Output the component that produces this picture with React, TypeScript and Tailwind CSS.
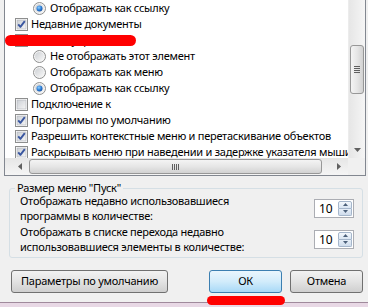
import React from 'react';

const font = { fontFamily: '"Noto Sans", "Segoe UI", sans-serif' };

function CheckBox({ checked }: { checked: boolean }) {
  return (
    <svg width="13" height="13" viewBox="0 0 13 13" className="shrink-0">
      <defs>
        <linearGradient id="cbg" x1="0" y1="0" x2="1" y2="1">
          <stop offset="0" stopColor="#cbcfd5" />
          <stop offset="1" stopColor="#f6f6f6" />
        </linearGradient>
      </defs>
      <rect x="0.5" y="0.5" width="12" height="12" fill="#fff" stroke="#8e8f8f" />
      <rect x="2" y="2" width="9" height="9" fill="url(#cbg)" stroke="#aeb3b9" strokeWidth="0.6" />
      {checked && (
        <path d="M3.2 6.4 L5.4 8.9 L9.8 3.2" fill="none" stroke="#3a57a0" strokeWidth="1.9" strokeLinejoin="round" />
      )}
    </svg>
  );
}

function Radio({ checked }: { checked: boolean }) {
  return (
    <svg width="13" height="13" viewBox="0 0 13 13" className="shrink-0">
      <defs>
        <linearGradient id="rbg" x1="0" y1="0" x2="1" y2="1">
          <stop offset="0" stopColor="#cdd0d4" />
          <stop offset="1" stopColor="#f8f8f8" />
        </linearGradient>
        <radialGradient id="rdot" cx="0.4" cy="0.35" r="0.7">
          <stop offset="0" stopColor="#8fd0ff" />
          <stop offset="0.6" stopColor="#2a7bd4" />
          <stop offset="1" stopColor="#1c4f9a" />
        </radialGradient>
      </defs>
      <circle cx="6.5" cy="6.5" r="6" fill="#f4f4f4" stroke="#8e8f8f" />
      <circle cx="6.5" cy="6.5" r="4.5" fill="url(#rbg)" />
      {checked && <circle cx="6.5" cy="6.5" r="3" fill="url(#rdot)" />}
    </svg>
  );
}

function CheckRow({ checked, label }: { checked: boolean; label: string }) {
  return (
    <div className="h-[16px] flex items-center pl-[10px] gap-[3px] whitespace-nowrap">
      <CheckBox checked={checked} />
      <span>{label}</span>
    </div>
  );
}

function RadioRow({ checked, label }: { checked: boolean; label: string }) {
  return (
    <div className="h-[16px] flex items-center pl-[28px] gap-[4px] whitespace-nowrap">
      <Radio checked={checked} />
      <span>{label}</span>
    </div>
  );
}

function Spinner() {
  return (
    <div className="flex w-[40px] h-[19px] border border-[#abadb3] bg-white shrink-0">
      <div className="flex-1 flex items-center pl-[4px] text-[12px] tracking-normal">10</div>
      <div className="w-[14px] flex flex-col my-[1px] mr-[1px]">
        <div className="flex-1 flex items-center justify-center border border-[#a5b6cb] rounded-t-[2px] bg-gradient-to-b from-[#f4f8fc] to-[#d9e5f2]">
          <svg width="5" height="3" viewBox="0 0 5 3">
            <path d="M0 3 L2.5 0 L5 3 Z" fill="#4c607a" />
          </svg>
        </div>
        <div className="flex-1 flex items-center justify-center border border-t-0 border-[#a5b6cb] rounded-b-[2px] bg-gradient-to-b from-[#e6eef7] to-[#cfdcec]">
          <svg width="5" height="3" viewBox="0 0 5 3">
            <path d="M0 0 L2.5 3 L5 0 Z" fill="#4c607a" />
          </svg>
        </div>
      </div>
    </div>
  );
}

export default function App() {
  return (
    <div
      className="relative w-[368px] h-[307px] overflow-hidden bg-[#f0f0f0] text-[11px] tracking-[-0.25px] text-black"
      style={font}
    >
      {/* List box */}
      <div className="ml-[4px] mr-[2px] h-[176px] border-x border-b border-[#828790] bg-white flex flex-col">
        <div className="flex h-[158px]">
          <div className="flex-1 overflow-hidden leading-[16px]">
            <RadioRow checked label="Отображать как ссылку" />
            <CheckRow checked label="Недавние документы" />
            <CheckRow checked label="Панель управления" />
            <RadioRow checked={false} label="Не отображать этот элемент" />
            <RadioRow checked={false} label="Отображать как меню" />
            <RadioRow checked label="Отображать как ссылку" />
            <CheckRow checked={false} label="Подключение к" />
            <CheckRow checked label="Программы по умолчанию" />
            <CheckRow checked label="Разрешить контекстные меню и перетаскивание объектов" />
            <CheckRow checked label="Раскрывать меню при наведении и задержке указателя мыши" />
          </div>
          {/* Vertical scrollbar */}
          <div className="w-[17px] flex flex-col bg-gradient-to-r from-[#e6e6e6] to-[#f5f5f5] border-l border-[#ececec]">
            <div className="flex-1 pt-[45px] px-[1px]">
              <div className="h-[49px] rounded-[3px] border border-[#979797] bg-gradient-to-r from-[#f4f4f4] via-[#e6e6e6] to-[#d2d2d2] flex flex-col items-center justify-center gap-[1px]">
                <div className="w-[6px] h-[1px] bg-[#5f5f5f]" />
                <div className="w-[6px] h-[1px] bg-[#5f5f5f]" />
                <div className="w-[6px] h-[1px] bg-[#5f5f5f]" />
                <div className="w-[6px] h-[1px] bg-[#5f5f5f]" />
              </div>
            </div>
            <div className="h-[17px] flex items-center justify-center">
              <svg width="7" height="4" viewBox="0 0 7 4">
                <path d="M0 0 L7 0 L3.5 4 Z" fill="#606060" />
              </svg>
            </div>
          </div>
        </div>
        {/* Horizontal scrollbar */}
        <div className="flex h-[17px]">
          <div className="flex-1 flex bg-gradient-to-b from-[#e6e6e6] to-[#f5f5f5]">
            <div className="w-[24px] flex items-center justify-center pl-[6px]">
              <svg width="4" height="7" viewBox="0 0 4 7">
                <path d="M4 0 L4 7 L0 3.5 Z" fill="#606060" />
              </svg>
            </div>
            <div className="w-[293px] my-[1px] rounded-[3px] border border-[#979797] bg-gradient-to-b from-[#f4f4f4] via-[#e6e6e6] to-[#d2d2d2] flex items-center justify-center gap-[1px]">
              <div className="w-[1px] h-[6px] bg-[#5f5f5f]" />
              <div className="w-[1px] h-[6px] bg-[#5f5f5f]" />
              <div className="w-[1px] h-[6px] bg-[#5f5f5f]" />
              <div className="w-[1px] h-[6px] bg-[#5f5f5f]" />
            </div>
            <div className="flex-1 flex items-center justify-end pr-[7px]">
              <svg width="4" height="7" viewBox="0 0 4 7">
                <path d="M0 0 L0 7 L4 3.5 Z" fill="#606060" />
              </svg>
            </div>
          </div>
          <div className="w-[17px] bg-[#f0f0f0]" />
        </div>
      </div>

      {/* Group box */}
      <div className="relative mt-[12px] ml-[9px] mr-[5px] h-[70px] border border-[#d5dfe5] rounded-[3px] pt-[4px] pl-[10px] pr-[8px] flex flex-col gap-[1px] leading-[15px]">
        <div className="absolute left-[5px] top-[-8px] px-[2px] bg-[#f0f0f0] leading-[13px]">
          Размер меню "Пуск"
        </div>
        <div className="flex items-center justify-between h-[30px]">
          <div>
            Отображать недавно использовавшиеся
            <br />
            программы в количестве:
          </div>
          <Spinner />
        </div>
        <div className="flex items-center justify-between h-[30px]">
          <div>
            Отображать в списке перехода недавно
            <br />
            использовавшиеся элементы в количестве:
          </div>
          <Spinner />
        </div>
      </div>

      {/* Buttons */}
      <div className="mt-[12px] ml-[11px] mr-[5px] flex justify-between">
        <button className="w-[157px] h-[23px] rounded-[3px] border border-[#707070] bg-gradient-to-b from-[#f2f2f2] via-[#e3e3e3] to-[#cfcfcf] text-[11px] whitespace-nowrap">
          Параметры по умолчанию
        </button>
        <div className="flex gap-[8px]">
          <button className="w-[73px] h-[23px] rounded-[3px] border border-[#3c7fb1] bg-gradient-to-b from-[#eaf6fd] via-[#d2ecfb] to-[#a8d9f7] text-[11px]">
            ОК
          </button>
          <button className="w-[73px] h-[23px] rounded-[3px] border border-[#707070] bg-gradient-to-b from-[#f2f2f2] via-[#e3e3e3] to-[#cfcfcf] text-[11px]">
            Отмена
          </button>
        </div>
      </div>

      {/* Window bottom frame */}
      <div className="mt-[9px] h-[5px] border-t border-[#a08a9c] bg-[#e8d8e5]" />

      {/* Red marker strokes */}
      <div className="absolute left-[5px] top-[35px] w-[131px] h-[11px] rounded-full bg-[#ff0000] blur-[0.6px]" />
      <div className="absolute left-[207px] top-[296px] w-[78px] h-[9px] rounded-full bg-[#ff0000] blur-[0.6px]" />
    </div>
  );
}
